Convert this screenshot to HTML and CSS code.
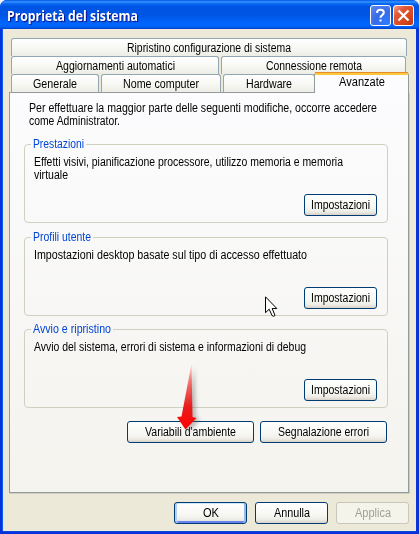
FILE: index.html
```html
<!DOCTYPE html>
<html lang="it">
<head>
<meta charset="utf-8">
<title>Proprietà del sistema</title>
<link rel="stylesheet" href="styles.css">
</head>
<body>
<div class="window">
  <header class="titlebar">
    <h1 class="title"><span data-w="131">Proprietà del sistema</span></h1>
    <button class="tb-btn help" aria-label="?">
      <svg width="19" height="19" viewBox="0 0 19 19"><path d="M6.2 7V6Q6.500 3.800 9.500 3.800Q12.800 3.800 12.800 6.600Q12.800 8 11.200 9.100Q9.500 10.200 9.500 11.800M9.500 13.400V15.600" fill="none" stroke="#fff" stroke-width="2.1"/></svg>
    </button>
    <button class="tb-btn close" aria-label="X">
      <svg width="19" height="19" viewBox="0 0 19 19"><path d="M4.500 4.500L14.500 14.500M14.500 4.500L4.500 14.500" fill="none" stroke="#fff" stroke-width="2.2"/></svg>
    </button>
  </header>
  <main class="body">
    <nav class="tabs">
      <div class="row row1"><div class="tab"><span data-w="164">Ripristino configurazione di sistema</span></div></div>
      <div class="row row2">
        <div class="tab"><span data-w="119">Aggiornamenti automatici</span></div>
        <div class="tab"><span data-w="96">Connessione remota</span></div>
      </div>
      <div class="row row3">
        <div class="tab"><span data-w="44">Generale</span></div>
        <div class="tab"><span data-w="76">Nome computer</span></div>
        <div class="tab"><span data-w="46">Hardware</span></div>
        <div class="tab active"><span data-w="46">Avanzate</span></div>
      </div>
    </nav>
    <section class="panel">
      <p class="intro"><span data-w="348">Per effettuare la maggior parte delle seguenti modifiche, occorre accedere</span><br><span data-w="91">come Administrator.</span></p>
      <fieldset class="group g1">
        <legend><span data-w="51">Prestazioni</span></legend>
        <p><span data-w="309">Effetti visivi, pianificazione processore, utilizzo memoria e memoria</span><br><span data-w="34">virtuale</span></p>
        <button class="btn"><span data-w="59">Impostazioni</span></button>
      </fieldset>
      <fieldset class="group g2">
        <legend><span data-w="58">Profili utente</span></legend>
        <p><span data-w="273">Impostazioni desktop basate sul tipo di accesso effettuato</span></p>
        <button class="btn"><span data-w="59">Impostazioni</span></button>
      </fieldset>
      <fieldset class="group g3">
        <legend><span data-w="78">Avvio e ripristino</span></legend>
        <p><span data-w="272">Avvio del sistema, errori di sistema e informazioni di debug</span></p>
        <button class="btn"><span data-w="59">Impostazioni</span></button>
      </fieldset>
      <div class="wide">
        <button class="btn"><span data-w="91">Variabili d'ambiente</span></button>
        <button class="btn"><span data-w="91">Segnalazione errori</span></button>
      </div>
    </section>
    <footer class="actions">
      <button class="btn default"><span data-w="16">OK</span></button>
      <button class="btn"><span data-w="36">Annulla</span></button>
      <button class="btn disabled" disabled><span data-w="36">Applica</span></button>
    </footer>
  </main>
  <svg class="arrow" width="40" height="76" viewBox="0 0 40 76">
    <defs>
      <linearGradient id="red" x1="0" y1="0" x2="0" y2="1"><stop offset="0" stop-color="#f33" stop-opacity=".15"/><stop offset=".35" stop-color="#f04747" stop-opacity=".85"/><stop offset=".65" stop-color="#e81c1c"/><stop offset="1" stop-color="#f00"/></linearGradient>
      <filter id="soft" x="-50%" y="-20%" width="200%" height="140%"><feGaussianBlur stdDeviation="2"/></filter>
    </defs>
    <path d="M19 3L21 54L25 56L14 68L6 56H10Z" fill="#555" opacity=".4" filter="url(#soft)"/>
    <path d="M16.500 0L17.500 53L21.500 54L10.500 65.500L2 53L6.500 52.500Z" fill="url(#red)"/>
  </svg>
  <svg class="cursor" width="14" height="22" viewBox="0 0 14 22"><path d="M.5 .8V16.700L4.200 13.200L7 19.500Q8.500 21 10 19.500L7.200 12.500H11.800Z" fill="#fff" stroke="#000"/></svg>
</div>
<script src="fit.js"></script>
</body>
</html>
```
FILE: styles.css
```css
* { box-sizing: border-box; }
body { margin: 0; background: #f4f4f8; font: 12px/13px "Liberation Sans", sans-serif; color: #000; }
button { font: inherit; color: inherit; padding: 0; }
span { display: inline-block; white-space: nowrap; transform-origin: 0 50%; text-align: left; }
p { margin: 0; }
.window { position: relative; width: 419px; height: 534px; overflow: hidden; display: flex; flex-direction: column; border-radius: 7px 7px 0 0; background: #0831d9; }
.titlebar { flex: none; height: 29px; display: flex; align-items: center; padding: 2px 5px 0 7px; background: linear-gradient(#0058e6 0, #3a93ff 7%, #0a6bf5 12%, #0054e3 22%, #0055e5 52%, #0066ff 82%, #0062f8 92%, #003fcb 100%); }
.title { margin: 0; flex: 1; font: bold 13.5px/20px "Open Sans", sans-serif; color: #fff; text-shadow: 1px 1px 1px #0f1089; }
.tb-btn { width: 21px; height: 21px; border: 1px solid #fff; border-radius: 3px; margin-left: 2px; overflow: hidden; }
.tb-btn svg { display: block; }
.help { background: radial-gradient(circle at 80% 90%, #2c7bff, #376be8 50%, #5c8bf0); }
.close { background: linear-gradient(135deg, #f0a28a, #e05a36 30%, #d9451c 70%, #b63a12); }
.body { flex: 1; margin: 0 3px 3px; padding: 9px 0 0 6px; background: #ece9d8; box-shadow: -1px 0 #0a5cf0, 1px 0 #0b35d8, 0 1px #0b46dd; }
.tabs { height: 54px; padding-left: 2px; }
.row { height: 18px; display: grid; column-gap: 2px; }
.row1 { width: 396px; }
.row2 { width: 395px; grid-template-columns: 208px 185px; }
.row3 { width: 397px; grid-template-columns: 88px 120px 92px 93px; column-gap: 2px; }
.tab { height: 18px; border: 1px solid #91a7b4; border-bottom: 0; border-radius: 3px 3px 0 0; background: linear-gradient(#fff, #f7f7f3 55%, #edede6); text-align: center; line-height: 19px; }
.tab.active { position: relative; height: 21px; margin: -2px 0 0 -3px; width: 95px; border-top: 3px solid #ffc73c; border-color: #ffc73c #919b9c; background: #fcfcfe; line-height: 15px; }
.tab.active::before { content: ""; position: absolute; left: 0; right: 0; top: -3px; height: 1px; background: #e68b2c; }
.panel { width: 400px; height: 401px; border: 1px solid #919b9c; box-shadow: 1px 1px #d0cebf; background: linear-gradient(#fcfcfe, #f4f3ee); padding: 9px 20px 0 14px; }
.intro { padding-left: 5px; height: 36px; }
.group { margin: 0; width: 364px; height: 85px; border: 1px solid #d0d0bf; border-radius: 4px; padding: 0 0 0 9px; min-width: 0; }
.group legend { margin: 0 0 0 -3px; padding: 0 2px; color: #0046d5; height: 13px; }
.g2 { margin-top: 8px; }
.g3 { margin-top: 7px; }
.group p { height: 43px; padding-top: 5px; }
.btn { display: block; width: 73px; height: 22px; border: 1px solid #003c74; border-radius: 3px; background: linear-gradient(#fff, #f6f6f1 65%, #ecebe5 85%, #d8d1c7); text-align: center; line-height: 20px; }
.group .btn { margin-left: 270px; }
.wide { display: flex; gap: 6px; margin: 13px 0 0 103px; }
.wide .btn { width: 127px; }
.actions { display: flex; gap: 8px; padding: 9px 0 0 165px; }
.default { box-shadow: inset 2px 0 #b8cff5, inset -2px 0 #9db9eb, inset 0 1px #cee7ff, inset 0 -2px #6982ee; }
.disabled { color: #a1a192; border-color: #c9c7ba; background: #f5f4ea; }
.arrow { position: absolute; left: 175px; top: 364px; }
.cursor { position: absolute; left: 265px; top: 296px; }
```
FILE: fit.js
```js
// Condenses each label so that it fills its width in data-w.
document.querySelectorAll("[data-w]").forEach(function (label) {
  var natural = label.getBoundingClientRect().width;
  label.style.width = label.dataset.w + "px";
  label.style.transform = "scaleX(" + label.dataset.w / natural + ")";
});
```
